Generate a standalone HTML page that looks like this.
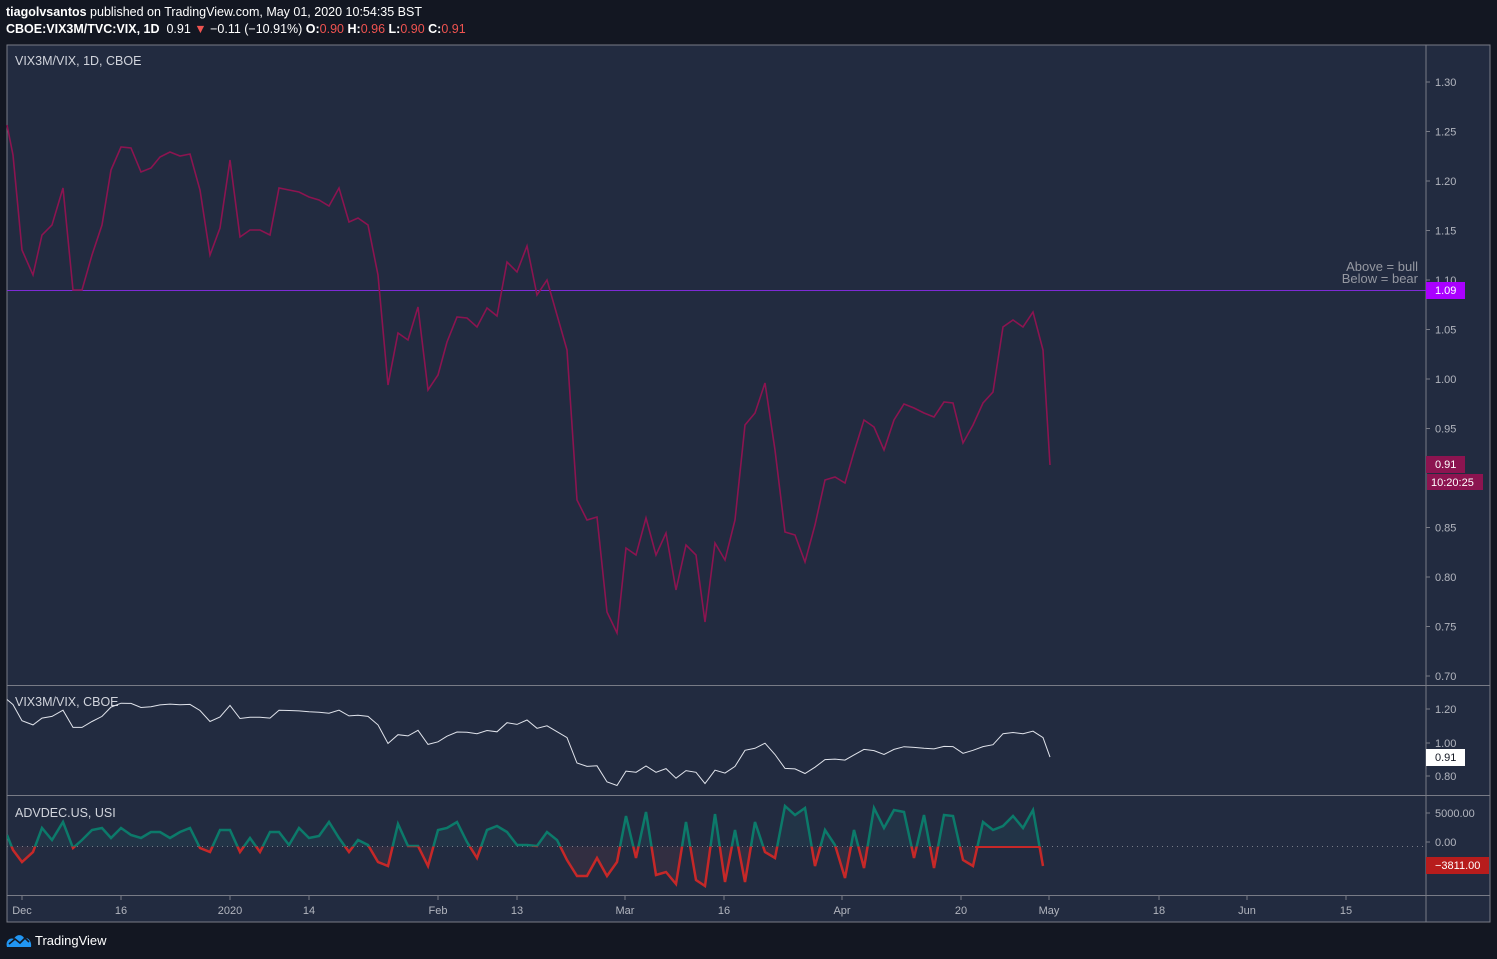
<!DOCTYPE html>
<html><head><meta charset="utf-8"><style>
html,body{margin:0;padding:0;background:#131722;width:1497px;height:959px;overflow:hidden;font-family:"Liberation Sans",sans-serif;}
.hdr{position:absolute;left:6px;color:#fff;font-size:12.5px;white-space:nowrap}
.r{color:#ef5350}
svg{position:absolute;left:0;top:0}
</style></head><body>
<div class="hdr" style="top:5px"><b>tiagolvsantos</b> published on TradingView.com, May 01, 2020 10:54:35 BST</div>
<div class="hdr" style="top:22px"><b>CBOE:VIX3M/TVC:VIX, 1D</b>&nbsp; 0.91 <span class="r">▼</span> −0.11 (−10.91%) <b>O:</b><span class="r">0.90</span> <b>H:</b><span class="r">0.96</span> <b>L:</b><span class="r">0.90</span> <b>C:</b><span class="r">0.91</span></div>
<svg id="s" width="1497" height="959" xmlns="http://www.w3.org/2000/svg" font-family="Liberation Sans, sans-serif">
<rect x="7" y="45" width="1483" height="877" fill="#222b40" stroke="#787b86" stroke-width="1"/>
<line x1="1426" y1="45" x2="1426" y2="922" stroke="#787b86"/>
<line x1="7" y1="685.5" x2="1490" y2="685.5" stroke="#787b86"/>
<line x1="7" y1="795.5" x2="1490" y2="795.5" stroke="#787b86"/>
<line x1="7" y1="895.5" x2="1490" y2="895.5" stroke="#787b86"/>
<text x="15" y="65" fill="#d1d4dc" font-size="12.5">VIX3M/VIX, 1D, CBOE</text>
<text x="15" y="706" fill="#d1d4dc" font-size="12.5">VIX3M/VIX, CBOE</text>
<text x="15" y="817" fill="#d1d4dc" font-size="12.5">ADVDEC.US, USI</text>
<line x1="7" y1="290.5" x2="1426" y2="290.5" stroke="#7e2bd6" stroke-width="1"/>
<text x="1418" y="271" fill="#9598a1" font-size="13" text-anchor="end">Above = bull</text>
<text x="1418" y="283" fill="#9598a1" font-size="13" text-anchor="end">Below = bear</text>
<line x1="7" y1="846.5" x2="1426" y2="846.5" stroke="#787b86" stroke-dasharray="1 4"/>
<g id="g"></g>
</svg>
<div style="position:absolute;left:6px;top:932px;color:#fff;font-size:13px;display:flex;align-items:center">
<svg style="position:static" width="26" height="16" viewBox="0 0 26 16"><path d="M1 15 C-1 9 4 5 8 7 C10 2 16 2 18 6 C22 5 26 9 25 15 Z" fill="#2196f3"/><path d="M3 12 L9 7 L14 11 L19 6 L23 10" stroke="#131722" stroke-width="1.6" fill="none"/></svg>
<span style="margin-left:3px">TradingView</span></div>
<script>
var P=[7,125,13,155,22,250,33,275,42,235,52,225,63,188,73,290,82,290,92,255,102,225,111,170,121,147,131,148,141,172,151,168,160,157,170,152,180,156,190,154,200,190,210,255,220,228,230,160,240,237,250,230,260,230,270,235,279,188,289,190,299,192,309,197,319,200,329,206,339,188,349,222,358,218,368,225,378,275,388,385,398,333,408,340,418,307,428,390,438,375,447,342,457,317,467,318,477,327,487,308,497,316,507,262,517,272,527,246,537,295,547,280,557,315,567,350,577,500,587,520,597,517,607,612,617,633,626,548,636,555,646,518,656,555,666,533,676,590,686,545,696,555,705,622,715,543,725,560,735,520,745,425,755,413,765,383,775,450,785,532,795,535,805,562,815,525,825,480,835,477,845,483,854,452,864,420,874,427,884,450,894,420,904,404,914,408,924,413,934,417,944,402,953,403,963,443,973,425,983,403,993,392,1003,327,1013,320,1023,327,1033,312,1043,350,1050,465];
var A=[7,835,13,850,22,862,33,852,42,828,52,840,63,822,73,848,82,840,92,830,102,828,111,838,121,828,131,835,141,838,151,832,160,832,170,838,180,832,190,828,200,848,210,852,220,830,230,830,240,852,250,838,260,852,270,832,279,832,289,845,299,828,309,838,319,836,329,822,339,838,349,852,358,840,368,845,378,862,388,866,398,824,408,846,418,846,428,866,438,830,447,828,457,822,467,842,477,858,487,830,497,826,507,832,517,845,527,845,537,846,547,832,557,840,567,860,577,876,587,876,597,858,607,876,617,862,626,816,636,858,646,812,656,875,666,872,676,884,686,822,696,880,705,886,715,814,725,882,735,830,745,882,755,822,765,852,775,858,785,806,795,815,805,808,815,866,825,830,835,845,845,878,854,830,864,868,874,808,884,828,894,810,904,812,914,858,924,815,934,868,944,815,953,816,963,860,973,866,983,822,993,830,1003,826,1013,816,1023,828,1033,810,1043,866];
function pts(a,f){var s=[];for(var i=0;i<a.length;i+=2){s.push(a[i]+','+f(a[i+1]).toFixed(1));}return s.join(' ');}
var h='';
h+='<defs><clipPath id="up"><rect x="7" y="796" width="1419" height="50.5"/></clipPath><clipPath id="dn"><rect x="7" y="846.5" width="1419" height="49"/></clipPath></defs>';
h+='<polyline points="'+pts(P,function(y){return y})+'" fill="none" stroke="#8c1450" stroke-width="1.6"/>';
h+='<polyline points="'+pts(P,function(y){var p=1.30-(y-82)/990;return 709+(1.20-p)*167.5;})+'" fill="none" stroke="#e0e3eb" stroke-width="1"/>';
var ap=pts(A,function(y){return y});
h+='<polygon clip-path="url(#up)" points="7,846.5 '+ap+' 1043,846.5" fill="#26a69a" opacity="0.08"/>';
h+='<polygon clip-path="url(#dn)" points="7,846.5 '+ap+' 1043,846.5" fill="#ef5350" opacity="0.08"/>';
h+='<polyline clip-path="url(#up)" points="'+ap+'" fill="none" stroke="#0c7a6a" stroke-width="2.5"/>';
h+='<polyline clip-path="url(#dn)" points="'+ap+'" fill="none" stroke="#c62828" stroke-width="2.5"/>';
h+='<line x1="975" y1="847" x2="1040" y2="847" stroke="#c62828" stroke-width="2"/>';
var L=['1.30','1.25','1.20','1.15','1.10','1.05','1.00','0.95','0.90','0.85','0.80','0.75','0.70'];
for(var i=0;i<L.length;i++){var y=82+i*49.5;if(i==8)continue;h+='<line x1="1426" y1="'+y+'" x2="1430" y2="'+y+'" stroke="#787b86"/><text x="1435" y="'+(y+4)+'" fill="#b2b5be" font-size="11">'+L[i]+'</text>';}
[[709,'1.20'],[743,'1.00'],[776,'0.80'],[813,'5000.00'],[842,'0.00']].forEach(function(t){h+='<line x1="1426" y1="'+t[0]+'" x2="1430" y2="'+t[0]+'" stroke="#787b86"/><text x="1435" y="'+(t[0]+4)+'" fill="#b2b5be" font-size="11">'+t[1]+'</text>';});
h+='<rect x="1426" y="282" width="39" height="17" fill="#aa00ff"/><text x="1435" y="294" fill="#fff" font-size="11">1.09</text>';
h+='<rect x="1426" y="456" width="39" height="17" fill="#8c1450"/><text x="1435" y="468" fill="#fff" font-size="11">0.91</text>';
h+='<rect x="1427" y="474" width="56" height="16" fill="#8c1450"/><text x="1431" y="486" fill="#fff" font-size="11">10:20:25</text>';
h+='<rect x="1426" y="749" width="39" height="17" fill="#ffffff"/><text x="1435" y="761" fill="#131722" font-size="11">0.91</text>';
h+='<rect x="1426" y="857" width="63" height="17" fill="#b71c1c"/><text x="1435" y="869" fill="#fff" font-size="11">−3811.00</text>';
[[22,'Dec'],[121,'16'],[230,'2020'],[309,'14'],[438,'Feb'],[517,'13'],[625,'Mar'],[724,'16'],[842,'Apr'],[961,'20'],[1049,'May'],[1159,'18'],[1247,'Jun'],[1346,'15']].forEach(function(t){h+='<line x1="'+t[0]+'" y1="896" x2="'+t[0]+'" y2="900" stroke="#787b86"/><text x="'+t[0]+'" y="914" fill="#b2b5be" font-size="11" text-anchor="middle">'+t[1]+'</text>';});
document.getElementById('g').innerHTML=h;
</script>
</body></html>
